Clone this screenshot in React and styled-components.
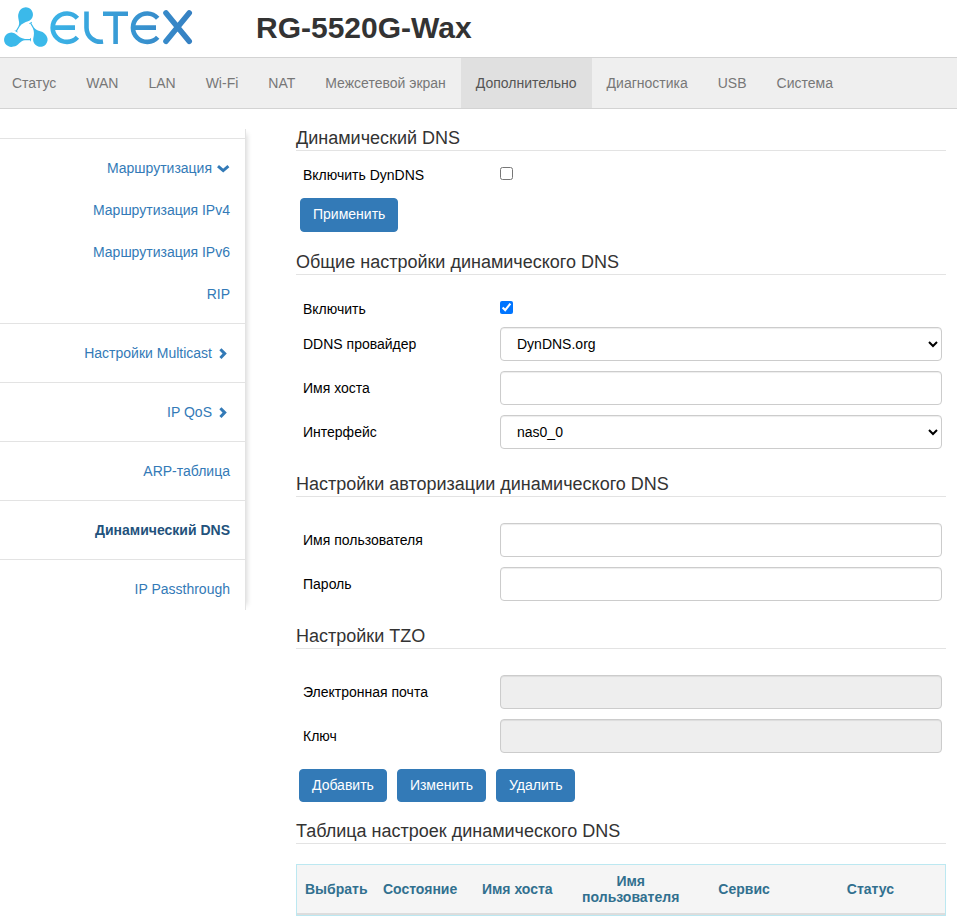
import React, { useState } from 'react';
import styled, { createGlobalStyle } from 'styled-components';

const GlobalStyle = createGlobalStyle`
  *,
  *::before,
  *::after {
    box-sizing: border-box;
  }

  body {
    margin: 0;
    background: #fff;
    color: #333;
    font-family: "Liberation Sans", Arial, sans-serif;
    font-size: 14px;
    line-height: 20px;
  }

  a {
    text-decoration: none;
  }
`;

const Header = styled.header`
  display: flex;
  align-items: center;
  height: 57px;
  padding: 0 4px 2px;
`;

const LogoLink = styled.a`
  flex: none;
  width: 252px;

  svg {
    display: block;
  }
`;

const Model = styled.h1`
  margin: 0;
  font-size: 30px;
  line-height: 34px;
  font-weight: bold;
`;

const Navbar = styled.nav`
  background: #efefef;
  border: solid #d3d3d3;
  border-width: 1px 0;
  overflow: hidden;
`;

const NavList = styled.ul`
  display: flex;
  margin: 0 0 0 -3px;
  padding: 0;
  list-style: none;
`;

const NavLink = styled.a`
  display: block;
  padding: 15px;
  color: ${({ $active }) => ($active ? '#555' : '#777')};
  background: ${({ $active }) => ($active ? '#e0e0e0' : 'transparent')};
`;

const Page = styled.div`
  display: flex;
  align-items: flex-start;
`;

const Sidebar = styled.aside`
  flex: 0 0 246px;
  margin-top: 20px;
  padding-top: 9px;
  border-right: 1px solid #e3e3e3;
  box-shadow: 6px 0 5px -5px rgba(0, 0, 0, 0.16);
`;

const MenuGroup = styled.ul`
  margin: 0;
  padding: 8px 0;
  border-top: 1px solid #e3e3e3;
  list-style: none;

  &:last-child {
    padding-bottom: 0;
  }
`;

const MenuLink = styled.a`
  display: flex;
  justify-content: flex-end;
  align-items: center;
  gap: 4px;
  padding: 11px 15px;
  color: ${({ $active }) => ($active ? '#23527c' : '#337ab7')};
  font-weight: ${({ $active }) => ($active ? 'bold' : 'normal')};
`;

const Content = styled.main`
  flex: 1;
  min-width: 0;
  padding: 19px 11px 20px 50px;
`;

const Section = styled.section`
  margin-bottom: ${({ $tight }) => ($tight ? '19px' : '20px')};
`;

const Title = styled.h2`
  margin: 0;
  padding-bottom: 2px;
  border-bottom: 1px solid #e3e3e3;
  font-size: 18px;
  line-height: 20px;
  font-weight: normal;
`;

const Fields = styled.div`
  padding: ${({ $near }) => ($near ? '11px' : '21px')} 4px 0 7px;
  color: #000;
`;

const Row = styled.div`
  display: grid;
  grid-template-columns: 197px 1fr;
  align-items: center;
  padding: 5px 0;
`;

const CheckRow = styled(Row)`
  align-items: start;
  line-height: 16px;
`;

const Checkbox = styled.input`
  width: 13px;
  height: 13px;
  margin: 0;
`;

const TextInput = styled.input`
  width: 100%;
  height: 34px;
  padding: 6px 12px;
  border: 1px solid #ccc;
  border-radius: 4px;
  background: #fff;
  box-shadow: inset 0 1px 1px rgba(0, 0, 0, 0.075);
  color: #000;
  font: inherit;

  &:disabled {
    background: #eee;
  }
`;

const Select = styled(TextInput).attrs({ as: 'select' })``;

const Actions = styled.div`
  display: flex;
  gap: 10px;
  padding: ${({ $grouped }) => ($grouped ? '11px 0 0 3px' : '10px 0 0 4px')};
`;

const Button = styled.button`
  height: ${({ $compact }) => ($compact ? '33px' : '34px')};
  padding: 0 12px 2px;
  border: 1px solid #337ab7;
  border-radius: 4px;
  background: #337ab7;
  color: #fff;
  font: inherit;
  cursor: pointer;
`;

const Table = styled.table`
  width: 100%;
  margin-top: 20px;
  table-layout: fixed;
  border: 1px solid #bce8f1;
  border-spacing: 0;
`;

const Th = styled.th`
  width: ${({ $width }) => $width};
  padding: 8px;
  border-bottom: 2px solid #ddd;
  background: #f5f5f5;
  color: #31708f;
  line-height: 16px;
  text-align: center;
`;

const drop =
  'M13.5 46.6A7.2 7.2 0 1 1 16 34.3C18.500 36.500 21 38.600 25 39L30.300 39V38H31V41.200H30.300V40.200L25 40.200C20 40.600 18.500 46 13.500 46.600Z';

const Logo = () => (
  <svg width="190" height="45" viewBox="4 5 190 45" role="img" aria-label="Eltex">
    <defs>
      <linearGradient id="brand" gradientUnits="userSpaceOnUse" x1="4" y1="0" x2="192" y2="0">
        <stop offset="0" stopColor="#3cc4f3" />
        <stop offset="1" stopColor="#3680c2" />
      </linearGradient>
    </defs>
    <g fill="#3bb9ea">
      <path d={drop} />
      <path d={drop} transform="rotate(120 25.8 31.3)" />
      <path d={drop} transform="rotate(240 25.8 31.3)" />
    </g>
    <g fill="none" stroke="url(#brand)" strokeWidth="4.6">
      <path d="M77.400 18.200A14.200 14.200 0 1 0 77.400 37.200M53.500 27.600H75" />
      <path d="M86.500 11.500V27.700A14.200 14.200 0 0 0 103 41.600" />
      <path d="M103 13.700H128M115.600 13.700V44" />
      <path d="M157.700 18.200A14.200 14.200 0 1 0 157.700 37.200M133.800 27.600H156" />
      <path strokeWidth="5.6" strokeLinecap="round" d="M166 13L189.200 41.300M189.200 13L166 41.300" />
    </g>
  </svg>
);

const Chevron = ({ open }) => (
  <svg width="14" height="14" viewBox="0 0 14 14" aria-hidden="true">
    <path
      fill="none"
      stroke="#337ab7"
      strokeWidth="3"
      d={open ? 'M2 5.200L7.200 9.600L12.400 5.200' : 'M4.400 3.200L8.700 7.600L4.400 12'}
    />
  </svg>
);

const navItems = [
  'Статус',
  'WAN',
  'LAN',
  'Wi-Fi',
  'NAT',
  'Межсетевой экран',
  'Дополнительно',
  'Диагностика',
  'USB',
  'Система',
];

const menuGroups = [
  [
    { label: 'Маршрутизация', expandable: true, open: true },
    { label: 'Маршрутизация IPv4' },
    { label: 'Маршрутизация IPv6' },
    { label: 'RIP' },
  ],
  [{ label: 'Настройки Multicast', expandable: true }],
  [{ label: 'IP QoS', expandable: true }],
  [{ label: 'ARP-таблица' }],
  [{ label: 'Динамический DNS', active: true }],
  [{ label: 'IP Passthrough' }],
];

const columns = [
  { label: 'Выбрать', width: '12%' },
  { label: 'Состояние', width: '14%' },
  { label: 'Имя хоста', width: '16%' },
  { label: 'Имя пользователя', width: '19%' },
  { label: 'Сервис', width: '16%' },
  { label: 'Статус', width: '23%' },
];

const Field = ({ id, label, children, ...rest }) => (
  <Row>
    <label htmlFor={id}>{label}</label>
    {children || <TextInput id={id} type="text" {...rest} />}
  </Row>
);

const CheckField = ({ id, label, checked, onChange }) => (
  <CheckRow>
    <label htmlFor={id}>{label}</label>
    <Checkbox id={id} type="checkbox" checked={checked} onChange={(e) => onChange(e.target.checked)} />
  </CheckRow>
);

const App = () => {
  const [dynDns, setDynDns] = useState(false);
  const [enabled, setEnabled] = useState(true);

  return (
    <>
      <GlobalStyle />
      <Header>
        <LogoLink href="#">
          <Logo />
        </LogoLink>
        <Model>RG-5520G-Wax</Model>
      </Header>

      <Navbar>
        <NavList>
          {navItems.map((item) => (
            <li key={item}>
              <NavLink href="#" $active={item === 'Дополнительно'}>{item}</NavLink>
            </li>
          ))}
        </NavList>
      </Navbar>

      <Page>
        <Sidebar>
          {menuGroups.map((group) => (
            <MenuGroup key={group[0].label}>
              {group.map((item) => (
                <li key={item.label}>
                  <MenuLink href="#" $active={item.active}>
                    {item.label}
                    {item.expandable && <Chevron open={item.open} />}
                  </MenuLink>
                </li>
              ))}
            </MenuGroup>
          ))}
        </Sidebar>

        <Content>
          <Section>
            <Title>Динамический DNS</Title>
            <Fields $near>
              <CheckField id="dyndns" label="Включить DynDNS" checked={dynDns} onChange={setDynDns} />
            </Fields>
            <Actions>
              <Button type="button">Применить</Button>
            </Actions>
          </Section>

          <Section>
            <Title>Общие настройки динамического DNS</Title>
            <Fields>
              <CheckField id="enable" label="Включить" checked={enabled} onChange={setEnabled} />
              <Field id="provider" label="DDNS провайдер">
                <Select id="provider">
                  <option>DynDNS.org</option>
                </Select>
              </Field>
              <Field id="hostname" label="Имя хоста" />
              <Field id="interface" label="Интерфейс">
                <Select id="interface">
                  <option>nas0_0</option>
                </Select>
              </Field>
            </Fields>
          </Section>

          <Section>
            <Title>Настройки авторизации динамического DNS</Title>
            <Fields>
              <Field id="username" label="Имя пользователя" />
              <Field id="password" label="Пароль" type="password" />
            </Fields>
          </Section>

          <Section $tight>
            <Title>Настройки TZO</Title>
            <Fields>
              <Field id="email" label="Электронная почта" disabled />
              <Field id="key" label="Ключ" disabled />
            </Fields>
            <Actions $grouped>
              <Button type="button" $compact>Добавить</Button>
              <Button type="button" $compact>Изменить</Button>
              <Button type="button" $compact>Удалить</Button>
            </Actions>
          </Section>

          <section>
            <Title>Таблица настроек динамического DNS</Title>
            <Table>
              <thead>
                <tr>
                  {columns.map((col) => (
                    <Th key={col.label} scope="col" $width={col.width}>{col.label}</Th>
                  ))}
                </tr>
              </thead>
            </Table>
          </section>
        </Content>
      </Page>
    </>
  );
};

export default App;
